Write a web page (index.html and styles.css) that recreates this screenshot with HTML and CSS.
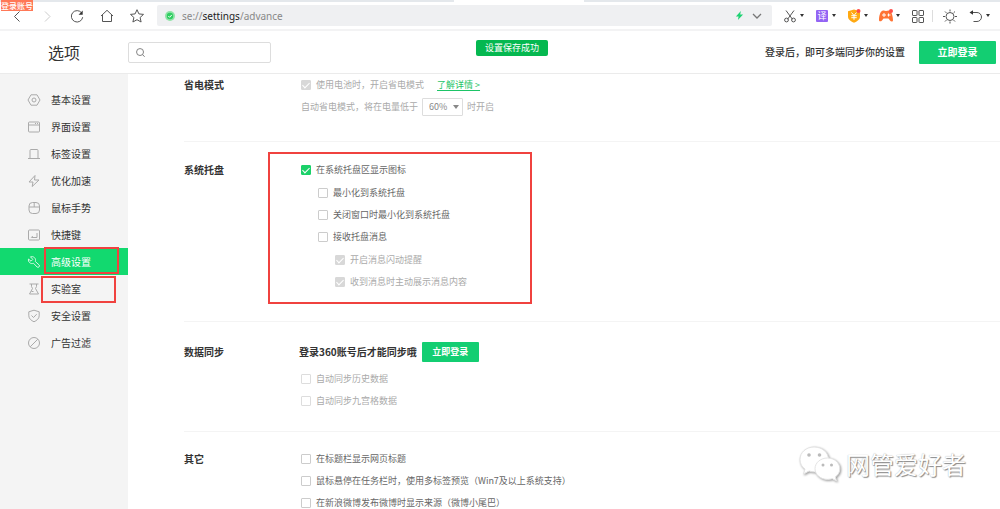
FILE: index.html
```html
<!DOCTYPE html>
<html lang="zh-CN">
<head>
<meta charset="utf-8">
<meta name="viewport" content="width=device-width, initial-scale=1">
<title>选项</title>
<link rel="stylesheet" href="styles.css">
</head>
<body>
<div class="tabstrip"><span class="tab-active"></span></div>
<div class="toolbar">
  <span class="login-badge">登录账号</span>
  <nav class="nav-buttons" aria-label="浏览">
    <button class="icon-btn" aria-label="后退"><svg viewBox="0 0 16 16"><path d="M10.500 3.500L5.500 8.500l5 5"/></svg></button>
    <button class="icon-btn faint" aria-label="前进"><svg viewBox="0 0 16 16"><path d="M6 3.500l5 5-5 5"/></svg></button>
    <button class="icon-btn" aria-label="刷新"><svg viewBox="0 0 16 16"><path d="M12.700 5A5.700 5.700 0 1 0 13.700 9.200"/><path class="solid" d="M13.700 2.500v4.200H9.600z"/></svg></button>
    <button class="icon-btn" aria-label="主页"><svg viewBox="0 0 16 16"><path d="M2 8L8 2.300 14 8M3.500 7v6.500h9V7"/></svg></button>
    <button class="icon-btn" aria-label="收藏"><svg viewBox="0 0 16 16"><path d="M8 1.700l1.900 4.200 4.600.5-3.400 3.100 1 4.500L8 11.700 3.900 14l1-4.500L1.500 6.400l4.600-.5z"/></svg></button>
  </nav>
  <div class="address">
    <svg class="site" viewBox="0 0 12 12"><circle cx="6" cy="6" r="5" fill="#8fe3a6"/><circle cx="6" cy="6" r="3.200" fill="#2fce62"/><path d="M4.300 6l1.300 1.300 2.200-2.400" fill="none" stroke="#fff"/></svg>
    <span class="url">se://<b>settings</b>/advance</span>
    <svg class="bolt" viewBox="0 0 10 12"><path d="M6.500 1L1 7h3l-.8 4L9 5H5.800z" fill="#1dd272"/></svg>
    <svg class="chevron" viewBox="0 0 12 12"><path d="M2 4l4 4 4-4" fill="none" stroke="#777" stroke-width="1.300"/></svg>
  </div>
  <div class="tools">
    <button class="tool" aria-label="截图"><svg viewBox="0 0 16 16"><path d="M4 2.500l6.500 8.800M12 2.500L5.500 11.300"/><circle cx="4.500" cy="12" r="1.900"/><circle cx="11.500" cy="12" r="1.900"/></svg><i class="caret"></i></button>
    <button class="tool" aria-label="翻译"><span class="translate">译</span><i class="caret"></i></button>
    <button class="tool" aria-label="钱包"><svg viewBox="0 0 16 16"><path d="M8 1.500l6 1.800v5.200c0 3.200-3 5-6 6.200-3-1.200-6-3-6-6.200V3.300z" fill="#ffa912" stroke="none"/><path d="M5.500 4.500L8 7.500l2.500-3M5.300 7.700h5.400M5.300 9.700h5.400M8 7.500v4.300" stroke="#fff"/><circle cx="12.500" cy="3" r="2" fill="#ff4d4a" stroke="none"/></svg><i class="caret"></i></button>
    <button class="tool" aria-label="游戏"><svg viewBox="0 0 16 16"><path d="M4 3c2-1 2.500 0 4 0s3-1 4.500.2C14 5 15 10 15 12s-2 1.800-3 .5L10.500 10.500h-5L4 12.500C2.500 14 .8 13.500 1 11.500 1.200 8 2 4.200 4 3z" fill="#ff7333" stroke="none"/><path d="M4 7h4M6 5v4M10.500 5.500v3M9.500 7h3" stroke="#fff"/><circle cx="13" cy="3" r="2" fill="#ff4d4a" stroke="none"/></svg><i class="caret"></i></button>
    <button class="tool" aria-label="扩展"><svg viewBox="0 0 16 16"><rect x="2.500" y="2.500" width="4.500" height="5" rx=".5"/><rect x="9" y="2.500" width="4.500" height="5" rx=".5"/><rect x="2.500" y="9.500" width="4.500" height="5" rx=".5"/><rect x="9" y="9.500" width="4.500" height="5" rx=".5"/></svg></button>
    <button class="tool after-line" aria-label="主题"><svg viewBox="0 0 16 16"><circle cx="8" cy="8.500" r="4"/><path d="M8 1.500v2M8 13.500v2M1 8.500h2M13 8.500h2M3 3.500l1.400 1.400M11.600 12.100L13 13.500M3 13.500l1.400-1.400M11.600 4.900L13 3.500"/></svg></button>
    <button class="tool last" aria-label="恢复"><svg viewBox="0 0 16 16"><path d="M3.500 4.500H9a4.500 4.500 0 0 1 0 9H5.500"/><path class="solid" d="M1.500 4.500l3.500-2.200v4.400z"/></svg><i class="caret"></i></button>
  </div>
</div>

<header class="header">
  <h1 class="page-title">选项</h1>
  <label class="search"><svg viewBox="0 0 12 12"><circle cx="5.500" cy="5.500" r="3.800"/><path d="M8.300 8.300l2.200 2.400"/></svg><input type="text" aria-label="搜索设置"></label>
  <span class="sync-note">登录后，即可多端同步你的设置</span>
  <button class="primary large">立即登录</button>
  <div class="toast" role="status">设置保存成功</div>
</header>

<div class="layout">
  <nav class="sidebar">
    <a href="#basic"><svg viewBox="0 0 14 14"><path d="M4 1.800h6L13 7l-3 5.200H4L1 7z"/><circle cx="7" cy="7" r="2"/></svg>基本设置</a>
    <a href="#ui"><svg viewBox="0 0 14 14"><rect x="1.500" y="2" width="11" height="10" rx="1"/><path d="M1.500 5h11M8 3.500h1M10 3.500h1"/></svg>界面设置</a>
    <a href="#tab"><svg viewBox="0 0 14 14"><path d="M1 11.500h2v-8q0-1 1-1h6q1 0 1 1v8h2M3 11.500h8"/></svg>标签设置</a>
    <a href="#speed"><svg viewBox="0 0 14 14"><path d="M8 1.500L2 8h4l-.8 4.500L12 6H7.500z"/></svg>优化加速</a>
    <a href="#mouse"><svg viewBox="0 0 14 14"><rect x="2" y="1.500" width="10.500" height="11" rx="3.500"/><path d="M2 6h10.500M7.200 1.500V6"/></svg>鼠标手势</a>
    <a href="#keys"><svg viewBox="0 0 14 14"><rect x="1.500" y="2" width="11" height="10" rx="1"/><path d="M10 5v4.500H4.500M5.800 8L4.300 9.500"/></svg>快捷键</a>
    <a href="#advance" class="current" aria-current="page"><svg viewBox="0 0 14 14"><path d="M3.500 1.800C6.500.8 9.500 3.500 8.300 6.500l4 3.600q.6 1-.3 1.800t-1.800.2L6.500 8.300C3.500 9.500.8 6.800 1.500 4L4 6.200l1.800-1.800z"/></svg>高级设置<span class="mark mark-current"></span></a>
    <a href="#lab"><svg viewBox="0 0 14 14"><path d="M2.500 2h9M4.500 2v2.500l1 2L2.500 12h9l-3-5.500 1-2V2M4.500 9.500h2"/></svg>实验室<span class="mark mark-lab"></span></a>
    <a href="#safe"><svg viewBox="0 0 14 14"><path d="M7 1.200l5.200 1.600v4c0 3-2.700 4.800-5.200 6-2.500-1.200-5.200-3-5.200-6v-4z"/><path d="M4.500 6.500l2 2 3.200-3.300"/></svg>安全设置</a>
    <a href="#ads"><svg viewBox="0 0 14 14"><circle cx="7" cy="7" r="5.500"/><path d="M3.200 10.800l7.600-7.600"/></svg>广告过滤</a>
  </nav>

  <main class="content">
    <section class="section first">
      <h2>省电模式</h2>
      <div class="options">
        <div class="row off"><label><input type="checkbox" checked disabled>使用电池时，开启省电模式</label><a class="more" href="#power">了解详情 &gt;</a></div>
        <div class="row off"><label for="level">自动省电模式，将在电量低于</label><span class="select"><select id="level" disabled><option>60%</option></select></span>时开启</div>
      </div>
    </section>
    <section class="section tray">
      <h2>系统托盘</h2>
      <div class="options">
        <div class="row"><label><input type="checkbox" checked>在系统托盘区显示图标</label></div>
        <div class="nested">
          <div class="row"><label><input type="checkbox">最小化到系统托盘</label></div>
          <div class="row"><label><input type="checkbox">关闭窗口时最小化到系统托盘</label></div>
          <div class="row"><label><input type="checkbox">接收托盘消息</label></div>
          <div class="nested">
            <div class="row off"><label><input type="checkbox" checked disabled>开启消息闪动提醒</label></div>
            <div class="row off"><label><input type="checkbox" checked disabled>收到消息时主动展示消息内容</label></div>
          </div>
        </div>
      </div>
      <span class="mark mark-tray"></span>
    </section>
    <section class="section sync">
      <h2>数据同步</h2>
      <div class="options">
        <div class="notice"><strong>登录360账号后才能同步哦</strong><button class="primary">立即登录</button></div>
        <div class="row off"><label><input type="checkbox" disabled>自动同步历史数据</label></div>
        <div class="row off"><label><input type="checkbox" disabled>自动同步九宫格数据</label></div>
      </div>
    </section>
    <section class="section">
      <h2>其它</h2>
      <div class="options">
        <div class="row"><label><input type="checkbox">在标题栏显示网页标题</label></div>
        <div class="row"><label><input type="checkbox">鼠标悬停在任务栏时，使用多标签预览（Win7及以上系统支持）</label></div>
        <div class="row"><label><input type="checkbox">在新浪微博发布微博时显示来源（微博小尾巴）</label></div>
      </div>
    </section>
  </main>
</div>

<div class="watermark">
  <svg viewBox="0 0 42 36"><path d="M15 1C7 1 1 6.500 1 13.500c0 4 1.700 7.300 5 9.600L4.500 28l5.600-3c2 .6 3.500.9 5.400.9 8 0 14-5.500 14-12.400S23.500 1 15 1z"/><path d="M28.500 12C21.500 12 16 16.800 16 22.700s5.500 10.700 12.500 10.700c1.700 0 3.300-.3 4.800-.7l4.200 2.300-1.200-4c3-2 4.500-5 4.500-8.300C40.800 16.800 35.300 12 28.500 12z"/><g class="eyes"><circle cx="10" cy="9" r="1.800"/><circle cx="20.500" cy="9" r="1.800"/><circle cx="24" cy="19" r="1.500"/><circle cx="32.500" cy="19" r="1.500"/></g></svg>
  <span>网管爱好者</span>
</div>
</body>
</html>
```
FILE: styles.css
```css
* { box-sizing: border-box; }
body {
  margin: 0;
  height: 100vh;
  overflow: hidden;
  display: flex;
  flex-direction: column;
  background: #fff;
  color: #666;
  font: 9px/22px "Noto Sans CJK SC", sans-serif;
}
button, input, select { font: inherit; color: inherit; margin: 0; padding: 0; }
button { border: 0; background: none; }
h1, h2 { margin: 0; }
svg { display: block; flex: none; }

.tabstrip { flex: none; height: 2px; background: #e4e8ec; display: flex; }
.tab-active { margin-left: 45.4%; width: 13%; background: #fff; }

.toolbar {
  flex: none;
  position: relative;
  display: flex;
  align-items: center;
  height: 29px;
  padding: 0 6px 0 2px;
  border-bottom: 2px solid #f3f3f4;
}
.login-badge {
  position: absolute;
  top: -2px;
  left: 1px;
  height: 11px;
  line-height: 11px;
  font-size: 8px;
  font-weight: 500;
  color: #fff;
  background: #ff7857;
}
.nav-buttons { display: flex; }
.icon-btn { width: 30px; height: 22px; display: grid; place-items: center; }
.icon-btn svg, .tool svg {
  width: 16px;
  height: 16px;
  fill: none;
  stroke: #555;
  stroke-width: 1;
}
.icon-btn.faint svg { stroke: #ccc; }
.icon-btn .solid, .tool .solid { fill: #333; stroke: none; }
.address {
  flex: 1;
  display: flex;
  align-items: center;
  height: 21px;
  margin: 0 10px 0 5px;
  padding: 0 9px 0 7px;
  border-radius: 2px;
  background: #eff0f2;
}
.site { width: 12px; height: 12px; }
.url { flex: 1; margin-left: 6px; font: 10px/20px "Noto Sans", sans-serif; color: #888; }
.url b { font-weight: 400; color: #222; }
.bolt { width: 9px; height: 11px; margin-right: 7px; }
.chevron { width: 12px; height: 12px; }
.tools { display: flex; }
.tool { width: 32px; height: 22px; display: flex; align-items: center; gap: 2px; }
.tool.after-line { position: relative; width: 26px; }
.tool.after-line::before { content: ""; position: absolute; left: -10px; height: 12px; border-left: 1px solid #ddd; }
.tool.last { width: 26px; }
.caret { border: 2px solid transparent; border-top: 3px solid #333; border-bottom: 0; }
.translate {
  width: 12px;
  height: 12px;
  margin: 0 2px;
  border-radius: 1px;
  background: #9364f4;
  color: #fff;
  font-size: 9px;
  line-height: 12px;
}

.header {
  flex: none;
  position: relative;
  display: flex;
  align-items: center;
  height: 43px;
  padding-right: 4px;
  border-bottom: 1px solid #ebebeb;
}
.page-title { width: 128px; font-size: 16px; font-weight: 400; color: #333; text-align: center; }
.search {
  display: flex;
  align-items: center;
  width: 143px;
  height: 21px;
  padding-left: 6px;
  border: 1px solid #ddd;
  border-radius: 2px;
}
.search svg { width: 11px; height: 11px; fill: none; stroke: #777; }
.search input { flex: 1; min-width: 0; height: 100%; padding-left: 4px; border: 0; outline: 0; background: none; }
.sync-note { margin-left: auto; margin-right: 14px; font-size: 10px; font-weight: 500; color: #333; }
.primary {
  height: 20px;
  padding: 0 10px;
  min-width: 57px;
  border-radius: 1px;
  background: #13ce72;
  color: #fff;
  font-weight: 700;
  line-height: 20px;
}
.primary.large { min-width: 77px; height: 23px; font-size: 10px; }
.toast {
  position: absolute;
  top: 9px;
  left: 51.2%;
  transform: translateX(-50%);
  height: 16px;
  padding: 0 9px;
  border-radius: 2px;
  background: #05b850;
  color: #fff;
  line-height: 16px;
}

.layout { flex: 1; min-height: 0; display: flex; }
.sidebar { flex: none; width: 128px; padding-top: 12px; background: #f4f4f4; }
.sidebar a {
  position: relative;
  display: flex;
  align-items: center;
  gap: 10px;
  height: 27px;
  padding-left: 27px;
  color: #333;
  font-size: 10px;
  text-decoration: none;
}
.sidebar svg { width: 14px; height: 14px; fill: none; stroke: #aaa; stroke-width: 1; }
.sidebar .current { background: #12d96f; color: #fff; }
.sidebar .current svg { stroke: #d5f8e4; }
.mark { position: absolute; border: 2px solid #f0423f; pointer-events: none; }
.mark-current { left: 44px; top: -1px; width: 75px; height: 27px; z-index: 1; }
.mark-lab { left: 41px; top: 1px; width: 75px; height: 27px; z-index: 1; }
.mark-tray { left: 84px; top: 10px; width: 264px; height: 152px; }

.content { flex: 1; min-width: 0; padding-left: 56px; overflow: hidden; }
.section {
  position: relative;
  display: flex;
  padding: 16px 0 23px;
  border-bottom: 1px solid #f4f4f4;
}
.section.first { padding-top: 0; }
.section.tray { padding: 17px 0 28px; }
.section.sync { padding: 19px 0; }
.section h2 { width: 115px; font-size: 10px; font-weight: 700; color: #333; }
.options { flex: 1; min-width: 0; }
.row { display: flex; align-items: center; height: 22px; padding-left: 2px; }
.row label { display: flex; align-items: center; gap: 5px; }
.row.off { color: #aaa; }
.nested { padding: 1px 0 0 17px; }
.row input {
  appearance: none;
  display: grid;
  place-items: center;
  width: 10px;
  height: 10px;
  border: 1px solid #ccc;
  border-radius: 1px;
  background: #fff;
}
.row input:checked { border-color: #1bd169; background: #1bd169; }
.row input:checked::after {
  content: "";
  width: 3px;
  height: 6px;
  margin-bottom: 2px;
  border: solid #fff;
  border-width: 0 1px 1px 0;
  transform: rotate(45deg);
}
.row input:disabled { border-color: #ddd; }
.row input:disabled:checked { border-color: #d8d8d8; background: #d8d8d8; }
.more { margin-left: 13px; color: #1dc467; line-height: 12px; text-decoration: underline; text-underline-offset: 2px; }
.select { position: relative; margin: 0 4px; }
.select select {
  appearance: none;
  display: block;
  width: 41px;
  height: 18px;
  padding-left: 6px;
  border: 1px solid #ddd;
  border-radius: 1px;
  background: #fff;
  color: #888;
  line-height: 16px;
  opacity: 1;
}
.select::after {
  content: "";
  position: absolute;
  right: 4px;
  top: 7px;
  border: 3px solid transparent;
  border-top: 4px solid #888;
  border-bottom: 0;
}
.notice { display: flex; align-items: center; gap: 5px; height: 22px; margin-bottom: 5px; }
.notice strong { font-size: 10px; color: #333; }

.watermark {
  position: absolute;
  right: 34px;
  bottom: 27px;
  display: flex;
  align-items: center;
  gap: 5px;
  color: #fff;
  font-size: 24px;
  line-height: 36px;
  text-shadow: 1px 1px 1px #888, 0 0 1px #aaa;
}
.watermark svg { width: 42px; height: 36px; fill: #fff; overflow: visible; filter: drop-shadow(1px 1px 1px #999); }
.watermark path { stroke: #e4e4e4; stroke-width: 1; }
.watermark .eyes { fill: #bbb; }
```
